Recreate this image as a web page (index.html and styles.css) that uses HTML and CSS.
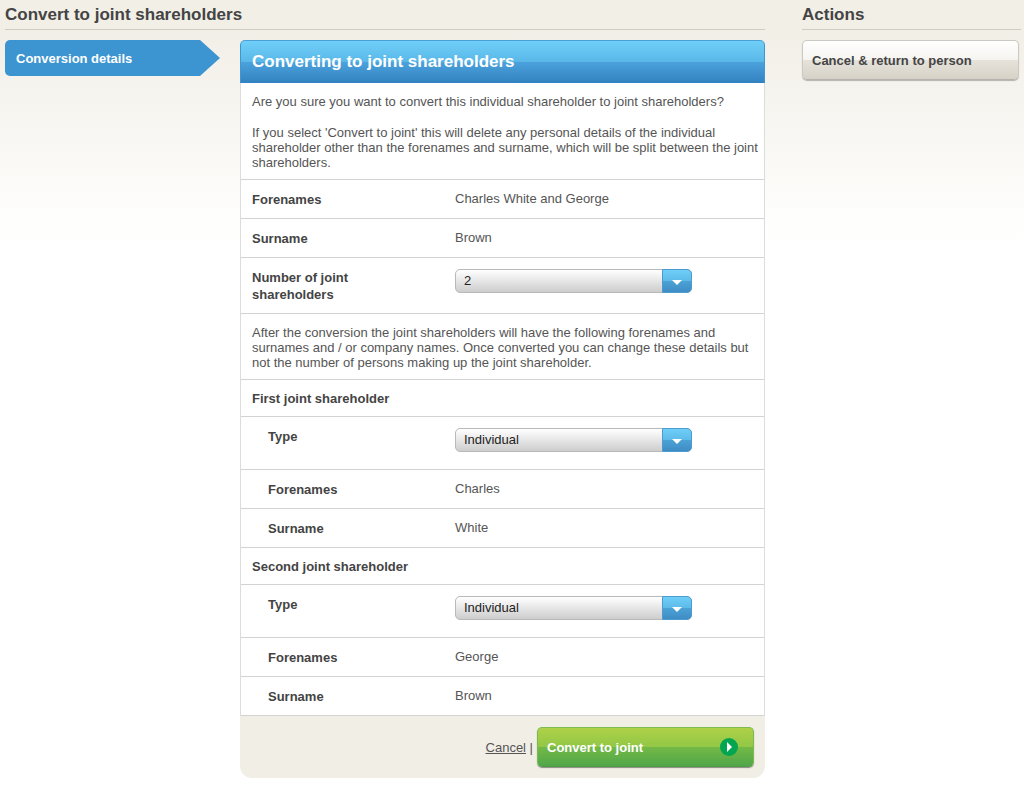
FILE: index.html
```
<!DOCTYPE html>
<html lang="en">

<head>
    <meta charset="UTF-8">
    <meta name="viewport" content="width=device-width, initial-scale=1.0">
    <title>Convert to joint shareholders</title>
    <link rel="stylesheet" href="styles.css">
</head>

<body>

    <div class="page">
        <main class="main">
            <h1 class="heading">Convert to joint shareholders</h1>

            <div class="columns">
                <nav class="steps">
                    <a href="#details" class="step">Conversion details</a>
                </nav>

                <form class="panel" id="details">
                    <h2 class="panel-title">Converting to joint shareholders</h2>

                    <div class="panel-body">
                        <div class="text">
                            <p>Are you sure you want to convert this individual shareholder to joint shareholders?</p>
                            <p>If you select 'Convert to joint' this will delete any personal details of the individual shareholder other than the forenames and surname, which will be split between the joint shareholders.</p>
                        </div>

                        <div class="row">
                            <span class="label">Forenames</span>
                            <span class="value">Charles White and George</span>
                        </div>
                        <div class="row">
                            <span class="label">Surname</span>
                            <span class="value">Brown</span>
                        </div>
                        <div class="row">
                            <label class="label" for="number">Number of joint shareholders</label>
                            <div class="select">
                                <select id="number">
                                    <option>2</option>
                                    <option>3</option>
                                    <option>4</option>
                                </select>
                            </div>
                        </div>

                        <div class="text">
                            <p>After the conversion the joint shareholders will have the following forenames and surnames and / or company names. Once converted you can change these details but not the number of persons making up the joint shareholder.</p>
                        </div>

                        <h3 class="section">First joint shareholder</h3>
                        <div class="row sub">
                            <label class="label" for="type1">Type</label>
                            <div class="select">
                                <select id="type1">
                                    <option>Individual</option>
                                    <option>Company</option>
                                </select>
                            </div>
                        </div>
                        <div class="row sub">
                            <span class="label">Forenames</span>
                            <span class="value">Charles</span>
                        </div>
                        <div class="row sub">
                            <span class="label">Surname</span>
                            <span class="value">White</span>
                        </div>

                        <h3 class="section">Second joint shareholder</h3>
                        <div class="row sub">
                            <label class="label" for="type2">Type</label>
                            <div class="select">
                                <select id="type2">
                                    <option>Individual</option>
                                    <option>Company</option>
                                </select>
                            </div>
                        </div>
                        <div class="row sub">
                            <span class="label">Forenames</span>
                            <span class="value">George</span>
                        </div>
                        <div class="row sub">
                            <span class="label">Surname</span>
                            <span class="value">Brown</span>
                        </div>
                    </div>

                    <div class="panel-footer">
                        <span><a href="#" class="cancel">Cancel</a> |</span>
                        <button type="submit" class="button button-green">
                            Convert to joint
                            <svg width="20" height="20" viewBox="0 0 20 20" aria-hidden="true">
                                <circle cx="10" cy="10" r="9" fill="#04a551" />
                                <path d="M8 5 L13 10 L8 15 Z" fill="#fff" />
                            </svg>
                        </button>
                    </div>
                </form>
            </div>
        </main>

        <aside class="side">
            <h2 class="heading">Actions</h2>
            <button type="button" class="button button-grey">Cancel &amp; return to person</button>
        </aside>
    </div>

</body>

</html>
```
FILE: styles.css
```
*, *::before, *::after {
    box-sizing: border-box;
}

body {
    margin: 0;
    background: linear-gradient(#f2efe7 0, #f2efe7 30px, #f7f5f0 110px, #fefefd 220px, #fff 250px) no-repeat;
    font-family: "Liberation Sans", Arial, sans-serif;
    font-size: 13px;
    line-height: 15px;
    color: #555;
}

h1, h2, h3, p {
    margin: 0;
}

.page {
    display: grid;
    grid-template-columns: minmax(0, 1fr) 219px;
    gap: 37px;
    padding: 0 3px 10px 5px;
}

.heading {
    margin-bottom: 10px;
    border-bottom: 1px solid #cfccc4;
    font-size: 17px;
    line-height: 29px;
    color: #444;
}

.columns {
    display: flex;
    align-items: flex-start;
    gap: 20px;
}

/* Arrow shaped step link */
.step {
    display: block;
    width: 215px;
    padding: 2px 11px 0;
    border-radius: 5px 0 0 5px;
    background: #3c95d1;
    clip-path: polygon(0 0, 195px 0, 100% 50%, 195px 100%, 0 100%);
    font-weight: bold;
    line-height: 34px;
    color: #fff;
    text-decoration: none;
}

.panel {
    flex: 1;
}

.panel-title {
    padding: 0 11px;
    border: 1px solid #4296cf;
    border-color: #4c9fd6 #4296cf #3383c2;
    border-radius: 5px 5px 0 0;
    background: linear-gradient(#70cff8, #59b8e8 50%, #4ca3dc 50%, #3383c2);
    font-size: 17px;
    line-height: 41px;
    color: #fff;
}

.panel-body {
    border: solid #dcdcdc;
    border-width: 0 1px;
    background: #fff;
}

.text {
    padding: 11px 5px 9px 11px;
    border-bottom: 1px solid #d3d3d3;
}

.text p + p {
    margin-top: 16px;
}

.row {
    display: grid;
    grid-template-columns: 203px 1fr;
    align-items: start;
    padding: 11px 11px 10px;
    border-bottom: 1px solid #d3d3d3;
}

.label {
    padding-right: 70px;
    font-weight: bold;
    line-height: 17px;
    color: #444;
}

.sub .label {
    padding-left: 16px;
}

.section {
    padding: 10px 11px 9px;
    border-bottom: 1px solid #d3d3d3;
    font-size: 13px;
    line-height: 17px;
    color: #444;
}

/* Drop-downs */
.select {
    position: relative;
    width: 237px;
    margin-bottom: 7px;
}

.select select {
    display: block;
    appearance: none;
    width: 100%;
    height: 24px;
    padding: 0 38px 2px 8px;
    border: 1px solid #b9b9b9;
    border-radius: 5px;
    background: linear-gradient(#fff, #cdcdcd);
    font: inherit;
    color: #222;
}

.select::before {
    content: "";
    position: absolute;
    top: 0;
    right: 0;
    width: 30px;
    height: 24px;
    border: 1px solid #4c9bce;
    border-radius: 0 5px 5px 0;
    background: linear-gradient(#70cff8, #5bbae8 50%, #4ba2d5 50%, #3f8dc5);
    pointer-events: none;
}

.select::after {
    content: "";
    position: absolute;
    top: 11px;
    right: 10px;
    border: 5px solid transparent;
    border-top-color: #fff;
    border-bottom: 0;
    pointer-events: none;
}

.panel-footer {
    display: flex;
    align-items: center;
    justify-content: flex-end;
    gap: 4px;
    padding: 11px;
    border-radius: 0 0 12px 12px;
    background: #f1eee6;
}

.cancel {
    color: #555;
}

.button {
    display: flex;
    align-items: center;
    justify-content: space-between;
    width: 217px;
    height: 40px;
    padding: 0 14px 0 9px;
    border-radius: 5px;
    font: bold 13px "Liberation Sans", Arial, sans-serif;
    cursor: pointer;
}

.button-grey {
    border: 1px solid #cbc9c4;
    border-bottom-color: #b5b3ae;
    background: linear-gradient(#fff, #f5f4f0 50%, #e6e3db 50%, #d6d2c7);
    box-shadow: 0 1px 1px #b5b3ae;
    color: #444;
}

.button-green {
    border: 1px solid #7dbb50;
    border-bottom-color: #4c9b47;
    background: linear-gradient(#aed148, #92c746 50%, #74b946 50%, #50a74a);
    box-shadow: 0 1px 1px #8a8a80;
    color: #fff;
}
```
